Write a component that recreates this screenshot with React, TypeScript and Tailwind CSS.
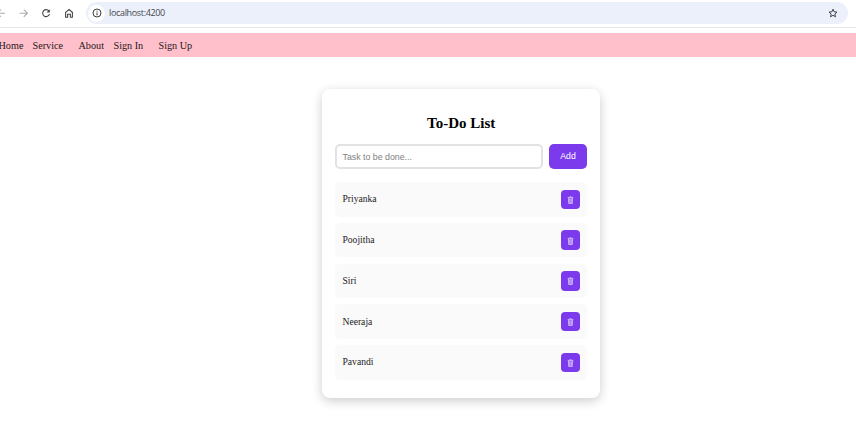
import React from "react";

const tasks = ["Priyanka", "Poojitha", "Siri", "Neeraja", "Pavandi"];

function TrashIcon() {
  return (
    <svg width="7" height="8" viewBox="0 0 7 8" fill="none" stroke="#dccbfb" strokeWidth="0.75">
      <path d="M1.4 1.6L1.7 7.5H5.3L5.6 1.6" fill="#9560f1" />
      <path d="M0.7 1.4H6.3M2.6 0.7H4.4M2.8 2.4V6.8M4.2 2.4V6.8" />
    </svg>
  );
}

function BrowserBar() {
  return (
    <header className="flex h-[28px] items-start border-b border-[#e6e7ea] bg-white pt-[2px]">
      <div className="flex h-[22px] w-[86px] shrink-0 items-center text-[#474747]">
        <svg width="80" height="22" viewBox="0 0 80 22" fill="none" stroke="currentColor" strokeWidth="1.1">
          <path d="M5 11.2H-3M0.8 7.6L-2.8 11.2L0.8 14.8" stroke="#a9abae" />
          <path d="M19.7 11.2H27.3M23.8 7.6L27.4 11.2L23.8 14.8" stroke="#a9abae" />
          <path d="M48.9 8.9A3.5 3.5 0 1 0 49.5 12.2" strokeWidth="1.1" />
          <path d="M49.8 7.2V10.5H46.5Z" fill="currentColor" stroke="none" />
          <path d="M65.6 10.3L69 7.5L72.4 10.3V15.2H70.4V12.3H67.6V15.2H65.6Z" strokeWidth="1.1" />
        </svg>
      </div>
      <div className="flex h-[22px] w-[762px] items-center rounded-full bg-[#ebf0fa] pl-[2px] pr-[10px]">
        <span className="flex size-[17px] items-center justify-center rounded-full bg-white">
          <svg width="10" height="10" viewBox="0 0 10 10" fill="none" stroke="#3c4043" strokeWidth="1">
            <circle cx="5" cy="5" r="4" />
            <path d="M5 4.5V7.3M5 2.7V3.7" />
          </svg>
        </span>
        <span className="ml-[4px] font-['Open_Sans',sans-serif] text-[9px] leading-[12px] tracking-[-0.34px] text-[#45484d]">
          localhost:4200
        </span>
        <svg className="ml-auto" width="10" height="10" viewBox="0 0 10 10" fill="none" stroke="#404347" strokeWidth="1">
          <path d="M5 1.2L6.1 3.8L9 4.1L6.8 6L7.5 8.8L5 7.3L2.5 8.8L3.2 6L1 4.1L3.9 3.8Z" />
        </svg>
      </div>
    </header>
  );
}

function Nav() {
  return (
    <nav className="mt-[5px] flex h-[24px] items-center bg-[#ffc0cb] pt-[1.5px] text-[10.2px] leading-[12px] whitespace-nowrap text-[#1f1719]">
      <a className="-ml-[1.5px] w-[34px] shrink-0">Home</a>
      <a className="w-[46px] shrink-0">Service</a>
      <a className="w-[35px] shrink-0">About</a>
      <a className="w-[45px] shrink-0">Sign In</a>
      <a>Sign Up</a>
    </nav>
  );
}

export default function App() {
  return (
    <div className="h-[446px] overflow-hidden bg-white font-['Liberation_Serif',serif]">
      <BrowserBar />
      <Nav />
      <main className="ml-[322.4px] mt-[31.5px] h-[309.5px] w-[277.4px] rounded-[8px] bg-white pl-[12.6px] pr-[12.4px] pt-[25.5px] shadow-[0_3px_11px_rgba(0,0,0,0.2)]">
        <h1 className="text-center text-[15px] leading-[18px] font-bold text-black">To-Do List</h1>
        <div className="mt-[12px] flex h-[25px] gap-[6px] font-['Liberation_Sans',sans-serif]">
          <input
            className="h-[25px] w-[208px] rounded-[5px] border-2 border-[#e2e2e2] bg-white px-[5.5px] text-[8.8px] outline-none placeholder:text-[#808080]"
            placeholder="Task to be done..."
          />
          <button className="h-[25px] w-[38px] rounded-[5px] bg-[#7c3aed] text-[8.7px] text-white">Add</button>
        </div>
        <ul className="mt-[13px] flex flex-col gap-[6.25px]">
          {tasks.map((task) => (
            <li
              key={task}
              className="flex h-[34.5px] items-center justify-between rounded-[5px] bg-[#fafafa] pl-[7.5px] pr-[7.2px] text-[9.6px] leading-[12px] text-[#222222]"
            >
              <span>{task}</span>
              <button aria-label="Delete task" className="flex h-[19.5px] w-[19px] items-center justify-center rounded-[4px] bg-[#7c3aed] pt-[1px]">
                <TrashIcon />
              </button>
            </li>
          ))}
        </ul>
      </main>
    </div>
  );
}
